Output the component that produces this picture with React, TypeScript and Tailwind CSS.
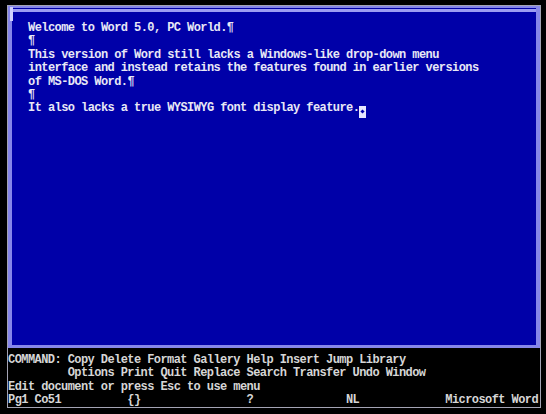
const docLines = [
  'Welcome to Word 5.0, PC World.¶',
  '¶',
  'This version of Word still lacks a Windows-like drop-down menu',
  'interface and instead retains the features found in earlier versions',
  'of MS-DOS Word.¶',
  '¶',
];

const menuLines = [
  'COMMAND: Copy Delete Format Gallery Help Insert Jump Library',
  '         Options Print Quit Replace Search Transfer Undo Window',
  'Edit document or press Esc to use menu',
  'Pg1 Co51          {}                ?              NL             Microsoft Word',
];

function Cursor() {
  return (
    <span className="inline-flex h-[12px] w-[6.6px] translate-y-[2px] items-center justify-center bg-[#e6e6ff] align-baseline">
      <span className="h-[3px] w-[3px] rotate-45 bg-[#0000a8]" />
    </span>
  );
}

export default function App() {
  return (
    <div className="h-[414px] w-[546px] overflow-hidden bg-black pt-[5px] pl-[7px] font-['Liberation_Mono',monospace] text-[12px] font-bold leading-[13.4px] tracking-[-0.575px]">
      <div className="flex h-[403px] w-[534px] flex-col overflow-hidden border border-[#a4a4b4]">
        {/* document window */}
        <div className="relative h-[342px] shrink-0 border-x-[4px] border-t-[2px] border-b-[3px] border-[#8686ea] bg-[#0000a8] pt-[14px] pl-[16px] text-[#e8e8f6] shadow-[inset_0_1px_0_#0000a8,inset_0_4px_0_#9c9cf2]">
          <div className="absolute top-[-1px] left-[-2px] h-[14px] w-[3px] bg-[#d0d0ff]" />
          {docLines.map((line, i) => (
            <div key={i} className="whitespace-pre">
              {line}
            </div>
          ))}
          <div className="whitespace-pre">
            It also lacks a true WYSIWYG font display feature.
            <Cursor />
          </div>
        </div>

        {/* command menu + status line */}
        <div className="mt-[6px] leading-[13.3px] text-[#d6d6d6]">
          {menuLines.map((line, i) => (
            <div key={i} className="whitespace-pre">
              {line}
            </div>
          ))}
        </div>
      </div>
    </div>
  );
}
